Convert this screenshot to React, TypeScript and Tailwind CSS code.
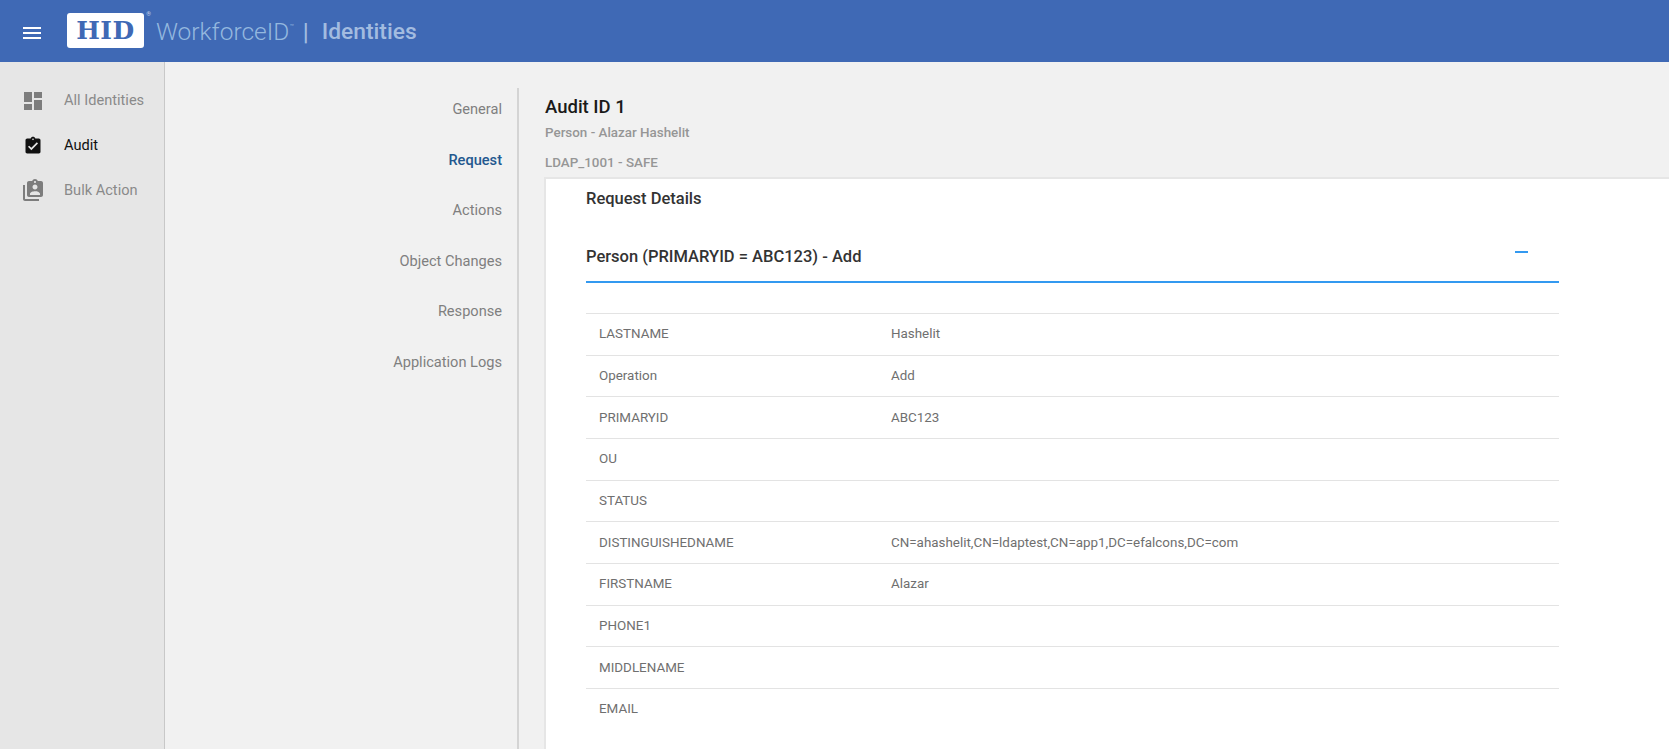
const sections = ["General", "Request", "Actions", "Object Changes", "Response", "Application Logs"];

const rows: [string, string][] = [
  ["LASTNAME", "Hashelit"],
  ["Operation", "Add"],
  ["PRIMARYID", "ABC123"],
  ["OU", ""],
  ["STATUS", ""],
  ["DISTINGUISHEDNAME", "CN=ahashelit,CN=ldaptest,CN=app1,DC=efalcons,DC=com"],
  ["FIRSTNAME", "Alazar"],
  ["PHONE1", ""],
  ["MIDDLENAME", ""],
  ["EMAIL", ""],
];

function MenuIcon() {
  return (
    <svg width="24" height="24" viewBox="0 0 24 24" fill="currentColor">
      <path d="M3 18h18v-2H3v2zm0-5h18v-2H3v2zm0-7v2h18V6H3z" />
    </svg>
  );
}

function DashboardIcon() {
  return (
    <svg width="24" height="24" viewBox="0 0 24 24" fill="currentColor">
      <path d="M3 13h8V3H3v10zm0 8h8v-6H3v6zm10 0h8V11h-8v10zm0-18v6h8V3h-8z" />
    </svg>
  );
}

function AssignmentIcon() {
  return (
    <svg width="20" height="20" viewBox="0 0 24 24" fill="currentColor">
      <path d="M19 3h-4.18C14.4 1.84 13.3 1 12 1s-2.4.84-2.82 2H5c-1.1 0-2 .9-2 2v14c0 1.1.9 2 2 2h14c1.1 0 2-.9 2-2V5c0-1.1-.9-2-2-2zm-7 0c.55 0 1 .45 1 1s-.45 1-1 1-1-.45-1-1 .45-1 1-1zm-2 14l-4-4 1.41-1.41L10 14.17l6.59-6.59L18 9l-8 8z" />
    </svg>
  );
}

function BulkIcon() {
  return (
    <svg width="24" height="24" viewBox="0 0 24 24" fill="currentColor">
      <path d="M4 6H2v14c0 1.1.9 2 2 2h14v-2H4V6zm16-4h-3.18C16.4.84 15.3 0 14 0s-2.4.84-2.82 2H8c-1.1 0-2 .9-2 2v12c0 1.1.9 2 2 2h12c1.1 0 2-.9 2-2V4c0-1.1-.9-2-2-2zm-6 0c.55 0 1 .45 1 1s-.45 1-1 1-1-.45-1-1 .45-1 1-1zm0 3.5c1.38 0 2.5 1.12 2.5 2.5s-1.12 2.5-2.5 2.5-2.5-1.12-2.5-2.5 1.12-2.5 2.5-2.5zM19 16H9v-1.2c0-1.67 3.33-2.5 5-2.5s5 .83 5 2.5V16z" />
    </svg>
  );
}

const nav = [
  { label: "All Identities", icon: <DashboardIcon />, active: false },
  { label: "Audit", icon: <AssignmentIcon />, active: true },
  { label: "Bulk Action", icon: <BulkIcon />, active: false },
];

export default function App() {
  return (
    <div className="flex h-[749px] flex-col overflow-hidden bg-[#f1f1f1] font-['Roboto',sans-serif]">
      <header className="flex h-[62px] shrink-0 items-center bg-[#3f69b5] text-[#94b8df]">
        <span className="mt-[4px] ml-[20px] text-white">
          <MenuIcon />
        </span>
        <div className="relative mb-[1px] ml-[23px] flex h-[35px] w-[77px] items-center justify-center rounded-[3px] bg-white">
          <span className="font-['DejaVu_Serif',serif] text-[25px] leading-none font-bold tracking-[0.5px] text-[#3f69b5]">
            HID
          </span>
          <span className="absolute top-[-2px] right-[-7px] text-[6px] leading-none text-[#c5d4ea]">®</span>
        </div>
        <span className="mt-[2px] ml-[12px] text-[24.5px] font-light">WorkforceID</span>
        <span className="mb-[8px] self-center text-[7px] leading-none">™</span>
        <span className="mt-[2px] ml-[9px] text-[24px] font-medium text-[#a3bce0]">|</span>
        <span className="mt-[2px] ml-[13px] text-[22.8px] font-medium text-[#a3bce0]">Identities</span>
      </header>
      <div className="flex min-h-0 flex-1">
        <aside className="w-[165px] shrink-0 border-r border-[#c8c8c8] bg-[#e6e6e6] pt-[16px]">
          {nav.map((item) => (
            <div
              key={item.label}
              className={`flex h-[45px] items-center text-[14.6px] ${item.active ? "text-[#111111]" : "text-[#8a8a8a]"}`}
            >
              <span className={`flex w-[24px] justify-center ml-[21px] ${item.active ? "text-[#111111]" : "text-[#7d7d7d]"}`}>
                {item.icon}
              </span>
              <span className="ml-[19px]">{item.label}</span>
            </div>
          ))}
        </aside>
        <div className="flex min-w-0 flex-1 pt-[26px]">
          <nav className="w-[354px] shrink-0 border-r-2 border-[#d4d4d4] pt-[11px] pr-[15px] text-right">
            {sections.map((s) => (
              <div
                key={s}
                className={`mb-[30.6px] text-[14.6px] leading-[20px] ${s === "Request" ? "font-medium text-[#23588f]" : "text-[#7f7f7f]"}`}
              >
                {s}
              </div>
            ))}
          </nav>
          <main className="flex min-w-0 flex-1 flex-col pt-[6px]">
            <div className="pb-[5px] pl-[26px]">
              <h1 className="text-[18.5px] leading-[26px] font-medium text-[#1a1a1a]">Audit ID 1</h1>
              <p className="mt-[4px] text-[13.4px] leading-[18px] font-medium text-[#969696]">Person - Alazar Hashelit</p>
              <p className="mt-[12px] text-[13.4px] leading-[18px] font-medium text-[#969696]">LDAP_1001 - SAFE</p>
            </div>
            <section className="ml-[25px] flex-1 border-t-2 border-l-2 border-[#e6e6e6] bg-white pl-[40px]">
              <h2 className="mt-[10px] text-[16.5px] leading-[20px] font-medium text-[#333333]">Request Details</h2>
              <div className="w-[973px]">
                <div className="flex items-center justify-between border-b-2 border-[#3399f0] pt-[36px] pb-[12px]">
                  <span className="text-[16.5px] leading-[24px] font-medium text-[#333333]">
                    Person (PRIMARYID = ABC123) - Add
                  </span>
                  <span className="mr-[31px] -mt-[10px] h-[2px] w-[13px] bg-[#3399f0]" />
                </div>
                <div className="mt-[30px]">
                  {rows.map(([k, v]) => (
                    <div key={k} className="flex h-[41.67px] items-center border-t border-[#e3e3e3] text-[13.4px] text-[#6f6f6f]">
                      <span className="ml-[13px] w-[292px]">{k}</span>
                      <span>{v}</span>
                    </div>
                  ))}
                </div>
              </div>
            </section>
          </main>
        </div>
      </div>
    </div>
  );
}
